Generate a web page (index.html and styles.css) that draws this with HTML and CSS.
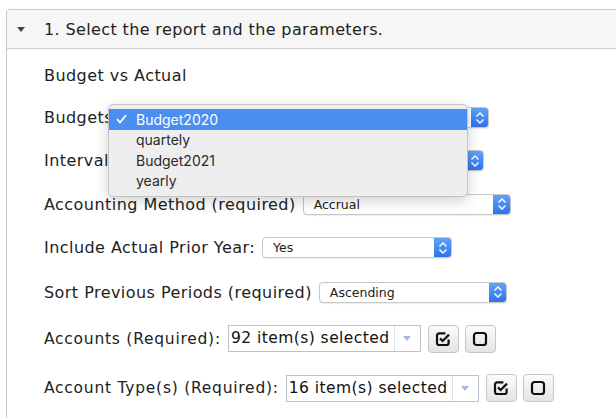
FILE: index.html
```html
<!DOCTYPE html>
<html>
<head>
<meta charset="utf-8">
<link rel="stylesheet" href="styles.css">
</head>
<body>
<div class="panel">
  <div class="panel-head"><span class="caret"></span><span>1. Select the report and the parameters.</span></div>
  <div class="panel-body">
    <div class="row r1"><span class="label">Budget vs Actual</span></div>
    <div class="row r2"><span class="label">Budgets:</span>
      <div class="select w-budgets"><span class="sel-text">Budget2020</span><span class="sel-btn"><svg width="18" height="20" viewBox="0 0 18 20"><path d="M5.5 8.5 L9 5 L12.5 8.5 M5.5 11.5 L9 15 L12.5 11.5" fill="none" stroke="#fff" stroke-width="1.4"/></svg></span></div>
    </div>
    <div class="row r3"><span class="label">Interval:</span>
      <div class="select w-interval"><span class="sel-text">quartely</span><span class="sel-btn"><svg width="18" height="20" viewBox="0 0 18 20"><path d="M5.5 8.5 L9 5 L12.5 8.5 M5.5 11.5 L9 15 L12.5 11.5" fill="none" stroke="#fff" stroke-width="1.4"/></svg></span></div>
    </div>
    <div class="row r4"><span class="label">Accounting Method (required)</span>
      <div class="select w-accrual"><span class="sel-text">Accrual</span><span class="sel-btn"><svg width="18" height="20" viewBox="0 0 18 20"><path d="M5.5 8.5 L9 5 L12.5 8.5 M5.5 11.5 L9 15 L12.5 11.5" fill="none" stroke="#fff" stroke-width="1.4"/></svg></span></div>
    </div>
    <div class="row r5"><span class="label">Include Actual Prior Year:</span>
      <div class="select w-yes"><span class="sel-text">Yes</span><span class="sel-btn"><svg width="18" height="20" viewBox="0 0 18 20"><path d="M5.5 8.5 L9 5 L12.5 8.5 M5.5 11.5 L9 15 L12.5 11.5" fill="none" stroke="#fff" stroke-width="1.4"/></svg></span></div>
    </div>
    <div class="row r6"><span class="label">Sort Previous Periods (required)</span>
      <div class="select w-asc"><span class="sel-text">Ascending</span><span class="sel-btn"><svg width="18" height="20" viewBox="0 0 18 20"><path d="M5.5 8.5 L9 5 L12.5 8.5 M5.5 11.5 L9 15 L12.5 11.5" fill="none" stroke="#fff" stroke-width="1.4"/></svg></span></div>
    </div>
    <div class="row r7"><span class="label label-t">Accounts (Required):</span>
      <div class="multi"><span class="multi-text">92 item(s) selected</span><span class="multi-arrow"><span class="tri"></span></span></div>
      <button class="btn"><svg width="16" height="16" viewBox="0 0 16 16"><path d="M13.6 8.6 V12 a2 2 0 0 1 -2 2 H4 a2 2 0 0 1 -2 -2 V4.4 a2 2 0 0 1 2 -2 H10.4" fill="none" stroke="#111" stroke-width="2.2"/><path d="M5 7.4 L7.6 10 L14 3.6" fill="none" stroke="#111" stroke-width="2.2"/></svg></button>
      <button class="btn"><svg width="16" height="16" viewBox="0 0 16 16"><rect x="2" y="2" width="12" height="12" rx="2.6" fill="none" stroke="#111" stroke-width="2.2"/></svg></button>
    </div>
    <div class="row r8"><span class="label label-t">Account Type(s) (Required):</span>
      <div class="multi m2"><span class="multi-text">16 item(s) selected</span><span class="multi-arrow"><span class="tri"></span></span></div>
      <button class="btn"><svg width="16" height="16" viewBox="0 0 16 16"><path d="M13.6 8.6 V12 a2 2 0 0 1 -2 2 H4 a2 2 0 0 1 -2 -2 V4.4 a2 2 0 0 1 2 -2 H10.4" fill="none" stroke="#111" stroke-width="2.2"/><path d="M5 7.4 L7.6 10 L14 3.6" fill="none" stroke="#111" stroke-width="2.2"/></svg></button>
      <button class="btn"><svg width="16" height="16" viewBox="0 0 16 16"><rect x="2" y="2" width="12" height="12" rx="2.6" fill="none" stroke="#111" stroke-width="2.2"/></svg></button>
    </div>
  </div>
</div>
<div class="popup">
  <div class="opt sel"><span class="check"><svg width="11" height="10" viewBox="0 0 11 10"><path d="M1 5.2 L4 8.4 L10 1.2" fill="none" stroke="#fff" stroke-width="1.7"/></svg></span>Budget2020</div>
  <div class="opt"><span class="check"></span>quartely</div>
  <div class="opt"><span class="check"></span>Budget2021</div>
  <div class="opt"><span class="check"></span>yearly</div>
</div>
</body>
</html>
```

FILE: styles.css
```css
html, body { margin: 0; padding: 0; background: #fff; }
body { font-family: "DejaVu Sans", Verdana, sans-serif; color: #222; width: 616px; height: 418px; overflow: hidden; position: relative; }

.panel { margin: 9px 0 0 6px; width: 640px; border: 1px solid #c9c9c9; border-radius: 4px 0 0 0; }
.panel-head { height: 38px; background: #f6f6f6; border-bottom: 1px solid #cfcfcf; display: flex; align-items: center; font-size: 16px; letter-spacing: 0.37px; color: #222; border-radius: 4px 0 0 0; }
.caret { width: 0; height: 0; border-left: 4px solid transparent; border-right: 4px solid transparent; border-top: 5px solid #444; margin: 1px 19px 0 10px; }

.panel-body { padding: 5px 0 10px 37px; }
.row { display: flex; align-items: center; gap: 7px; font-size: 16px; letter-spacing: 0.45px; }
.r1 { height: 42px; }
.r2 { height: 43px; }
.r3 { height: 43px; }
.r4 { height: 44px; }
.r5 { height: 43px; }
.r6 { height: 46px; }
.r7 { height: 47px; gap: 0; }
.r8 { height: 52px; gap: 0; }
.label { white-space: nowrap; }
.label-t { font-size: 15.5px; letter-spacing: 0.75px; margin-right: 7px; }

.select { height: 21px; box-sizing: border-box; border: 1px solid #c8c8c8; border-radius: 4px; display: flex; align-items: stretch; background: #fff; box-shadow: 0 1px 1px rgba(0,0,0,0.08); font-family: "DejaVu Sans", Verdana, sans-serif; font-size: 12.5px; letter-spacing: 0; color: #222; overflow: hidden; }
.sel-text { flex: 1; padding-left: 10px; line-height: 19px; }
.sel-btn { width: 18px; background: linear-gradient(#64a5f9, #2a71ea); display: flex; align-items: center; justify-content: center; margin: -1px -1px -1px 0; }
.w-budgets { width: 363px; }
.w-interval { width: 362px; }
.w-accrual { width: 208px; }
.w-yes { width: 190px; }
.w-asc { width: 188px; }

.multi { height: 27px; box-sizing: border-box; width: 193px; border: 1px solid #b8c2d0; display: flex; align-items: stretch; background: #fff; font-size: 15.5px; letter-spacing: 0.45px; color: #111; }
.m2 { width: 193px; }
.multi-text { flex: 1; padding-left: 2px; line-height: 25px; white-space: nowrap; overflow: hidden; }
.multi-arrow { width: 25px; border-left: 1px solid #dde1e8; display: flex; align-items: center; justify-content: center; }
.tri { width: 0; height: 0; border-left: 4px solid transparent; border-right: 4px solid transparent; border-top: 5px solid #a8b8d8; }

.btn { width: 31px; height: 28px; margin-left: 7px; border: 1px solid #c6c6c6; border-radius: 4px; background: linear-gradient(#fbfbfb, #e4e4e4); display: flex; align-items: center; justify-content: center; padding: 0; }
.btn + .btn { margin-left: 6px; }

.popup { position: absolute; left: 108px; top: 104px; width: 360px; box-sizing: border-box; padding: 4px 0 5px; background: #eeeeee; border: 1px solid #c4c4c4; border-radius: 5px; box-shadow: 0 4px 14px rgba(0,0,0,0.18); font-family: Inter, "Liberation Sans", sans-serif; font-size: 14px; color: #2a2a2a; }
.opt { height: 20.5px; display: flex; align-items: center; }
.opt.sel { background: #4b8ef1; color: #fff; }
.check { width: 27px; padding-left: 7px; box-sizing: border-box; display: flex; align-items: center; }
```
